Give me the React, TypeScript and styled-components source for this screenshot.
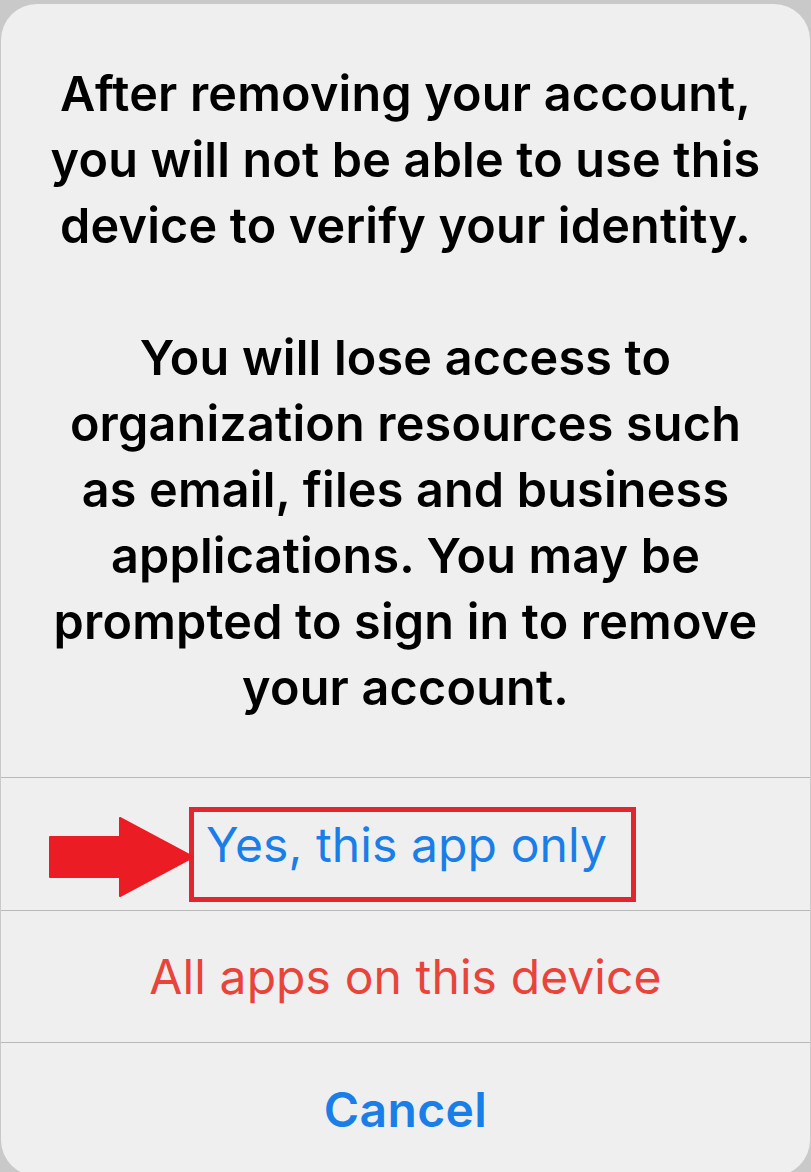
import styled, { createGlobalStyle } from 'styled-components';

const GlobalStyle = createGlobalStyle`
    html, body {
        margin: 0;
        padding: 0;
        background: #c9c9c9;
        overflow: hidden;
    }
    body {
        font-family: Inter, "Noto Sans", "Liberation Sans", sans-serif;
    }
`;

const Sheet = styled.div`
    box-sizing: border-box;
    margin: 4px 1px 0 1px;
    width: 809px;
    height: 1172px;
    background: #efeff0;
    border-radius: 36px;
    display: flex;
    flex-direction: column;
`;

const Message = styled.div`
    box-sizing: border-box;
    height: 776px;
    padding: 57px 20px 0;
    text-align: center;
    color: #000;
    font-weight: 600;
    font-size: 48.5px;
    line-height: 66px;
    letter-spacing: 0.2px;
    white-space: pre-line;
    border-bottom: 1.5px solid #b9b9bb;
`;

const Action = styled.div<{ $last?: boolean }>`
    box-sizing: border-box;
    height: 133px;
    display: flex;
    align-items: center;
    justify-content: center;
    border-bottom: ${p => (p.$last ? 'none' : '1.5px solid #b9b9bb')};
`;

const Label = styled.span<{ $tone: 'blue' | 'red'; $bold?: boolean }>`
    font-size: 48px;
    font-weight: ${p => (p.$bold ? 600 : 400)};
    color: ${p => (p.$tone === 'red' ? '#e8443a' : '#1a7ee9')};
    letter-spacing: ${p => (p.$bold ? '0.4px' : '0.1px')};
`;

const Highlight = styled.span`
    position: relative;
    box-sizing: border-box;
    display: inline-flex;
    align-items: center;
    height: 95px;
    padding: 0 24px 20px 12px;
    margin: 22px 0 0 14px;
    border: 5px solid #e0262f;
`;

const Pointer = styled.svg`
    position: absolute;
    right: 100%;
    top: 50%;
    margin-top: -38px;
    width: 146px;
    height: 80px;
`;

const message = `After removing your account,
you will not be able to use this
device to verify your identity.

You will lose access to
organization resources such
as email, files and business
applications. You may be
prompted to sign in to remove
your account.`;

export default function App() {
    return (
        <>
            <GlobalStyle />
            <Sheet>
                <Message>{message}</Message>
                <Action>
                    <Highlight>
                        <Pointer viewBox="0 0 146 80">
                            <path d="M2 20 H72 V1 L145 40 L72 79 V60 H2 Z" fill="#ec1c24" stroke="#ec1c24" strokeWidth="2" strokeLinejoin="round" />
                        </Pointer>
                        <Label $tone="blue">Yes, this app only</Label>
                    </Highlight>
                </Action>
                <Action>
                    <Label $tone="red">All apps on this device</Label>
                </Action>
                <Action $last>
                    <Label $tone="blue" $bold>Cancel</Label>
                </Action>
            </Sheet>
        </>
    );
}
